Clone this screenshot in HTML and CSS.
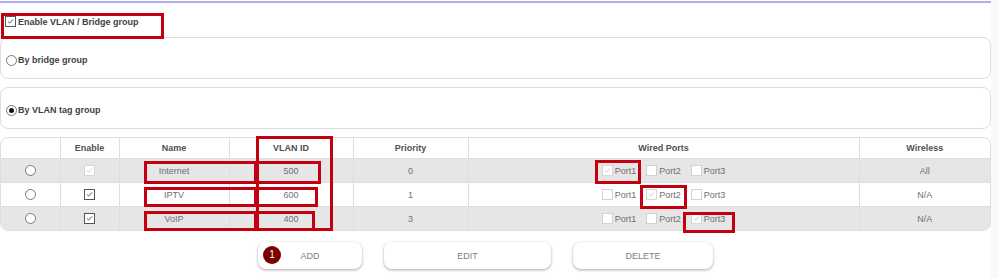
FILE: index.html
```html
<!DOCTYPE html>
<html lang="en">
<head>
  <meta charset="UTF-8">
  <title>VLAN / Bridge group</title>
  <link rel="stylesheet" href="styles.css">
</head>
<body>
  <div class="page">
    <div class="topline"></div>

    <div class="enable-row">
      <span class="cb checked"><svg viewBox="0 0 11 11"><path d="M2.5 5.5l2 2 4-4.5"/></svg></span>
      Enable VLAN / Bridge group
    </div>

    <div class="group-box">
      <span class="radio"></span>By bridge group
    </div>

    <div class="group-box">
      <span class="radio on"></span>By VLAN tag group
    </div>

    <div class="table-wrap">
      <table class="vlan-table">
        <colgroup>
          <col style="width:59px">
          <col style="width:59px">
          <col style="width:110px">
          <col style="width:124px">
          <col style="width:115px">
          <col style="width:391px">
          <col>
        </colgroup>
        <thead>
          <tr>
            <th></th>
            <th>Enable</th>
            <th>Name</th>
            <th>VLAN ID</th>
            <th>Priority</th>
            <th>Wired Ports</th>
            <th>Wireless</th>
          </tr>
        </thead>
        <tbody>
          <tr class="shade">
            <td><span class="radio"></span></td>
            <td><span class="cb checked disabled"><svg viewBox="0 0 11 11"><path d="M2.5 5.5l2 2 4-4.5"/></svg></span></td>
            <td>Internet</td>
            <td>500</td>
            <td>0</td>
            <td>
              <div class="ports">
                <span class="port"><span class="cb checked disabled"><svg viewBox="0 0 11 11"><path d="M2.5 5.5l2 2 4-4.5"/></svg></span>Port1</span>
                <span class="port"><span class="cb light"></span>Port2</span>
                <span class="port"><span class="cb light"></span>Port3</span>
              </div>
            </td>
            <td>All</td>
          </tr>
          <tr>
            <td><span class="radio"></span></td>
            <td><span class="cb checked"><svg viewBox="0 0 11 11"><path d="M2.5 5.5l2 2 4-4.5"/></svg></span></td>
            <td>IPTV</td>
            <td>600</td>
            <td>1</td>
            <td>
              <div class="ports">
                <span class="port"><span class="cb light"></span>Port1</span>
                <span class="port"><span class="cb checked disabled"><svg viewBox="0 0 11 11"><path d="M2.5 5.5l2 2 4-4.5"/></svg></span>Port2</span>
                <span class="port"><span class="cb light"></span>Port3</span>
              </div>
            </td>
            <td>N/A</td>
          </tr>
          <tr class="shade">
            <td><span class="radio"></span></td>
            <td><span class="cb checked"><svg viewBox="0 0 11 11"><path d="M2.5 5.5l2 2 4-4.5"/></svg></span></td>
            <td>VoIP</td>
            <td>400</td>
            <td>3</td>
            <td>
              <div class="ports">
                <span class="port"><span class="cb light"></span>Port1</span>
                <span class="port"><span class="cb light"></span>Port2</span>
                <span class="port"><span class="cb checked disabled"><svg viewBox="0 0 11 11"><path d="M2.5 5.5l2 2 4-4.5"/></svg></span>Port3</span>
              </div>
            </td>
            <td>N/A</td>
          </tr>
        </tbody>
      </table>
    </div>

    <div class="actions">
      <button class="btn btn-add" type="button"><span class="badge">1</span>ADD</button>
      <button class="btn btn-edit" type="button">EDIT</button>
      <button class="btn btn-delete" type="button">DELETE</button>
    </div>

    <!-- annotation marks -->
    <div class="mark mark-enable"></div>
    <div class="mark mark-vlan-col"></div>
    <div class="mark mark-internet"></div>
    <div class="mark mark-500"></div>
    <div class="mark mark-iptv"></div>
    <div class="mark mark-600"></div>
    <div class="mark mark-voip"></div>
    <div class="mark mark-400"></div>
    <div class="mark mark-port1"></div>
    <div class="mark mark-port2"></div>
    <div class="mark mark-port3"></div>
  </div>
</body>
</html>
```

FILE: styles.css
```css
body {
  margin: 0;
  padding: 0;
  font-family: "Liberation Sans", Arial, sans-serif;
  font-size: 9px;
  background: #f9f9f9;
}

.page {
  position: relative;
  width: 991px;
  height: 278px;
  background: #fff;
  padding-top: 1px;
  box-sizing: border-box;
}

.topline {
  height: 2px;
  background: #b4acf2;
}

.enable-row {
  display: flex;
  align-items: center;
  height: 34px;
  padding: 3px 0 0 5px;
  box-sizing: border-box;
  font-weight: bold;
  color: #3f3f3f;
}

.enable-row .cb {
  margin-right: 2px;
}

.group-box {
  display: flex;
  align-items: center;
  height: 42px;
  padding: 4px 0 0 5px;
  box-sizing: border-box;
  border: 1px solid #dedede;
  border-radius: 8px;
  font-weight: bold;
  color: #3f3f3f;
  margin-bottom: 8px;
}

.group-box .radio {
  margin-right: 1px;
}

/* checkbox */
.cb {
  display: inline-block;
  width: 11px;
  height: 11px;
  box-sizing: border-box;
  border: 1px solid #555;
  background: #fff;
  vertical-align: middle;
}

.cb svg {
  display: block;
  width: 9px;
  height: 9px;
  fill: none;
  stroke: #444;
  stroke-width: 1.1;
}

.cb.disabled {
  border-color: #d6d6d6;
}

.cb.disabled svg {
  stroke: #c4c4c4;
}

.cb.light {
  border-color: #d2d2d2;
}

/* radio */
.radio {
  display: inline-block;
  width: 11px;
  height: 11px;
  box-sizing: border-box;
  border: 1px solid #777;
  border-radius: 50%;
  background: #fff;
  position: relative;
  vertical-align: middle;
}

.radio.on::after {
  content: "";
  position: absolute;
  left: 2px;
  top: 2px;
  width: 5px;
  height: 5px;
  border-radius: 50%;
  background: #111;
}

/* table */
.table-wrap {
  border: 1px solid #dedede;
  border-radius: 8px;
  overflow: hidden;
}

.vlan-table {
  width: 100%;
  border-collapse: collapse;
  table-layout: fixed;
}

.vlan-table th,
.vlan-table td {
  text-align: center;
  padding: 0;
  border-left: 1px solid #dedede;
}

.vlan-table th:first-child,
.vlan-table td:first-child {
  border-left: none;
}

.vlan-table th {
  height: 20px;
  font-weight: bold;
  color: #505050;
}

.vlan-table td {
  height: 23px;
  color: #707070;
  border-top: 1px solid #dedede;
}

.vlan-table tr.shade td {
  background: #e6e6e6;
}

.ports {
  display: flex;
  justify-content: center;
  gap: 10px;
}

.port {
  display: flex;
  align-items: center;
  gap: 2px;
  color: #707070;
}

/* buttons */
.actions {
  display: flex;
  gap: 22px;
  padding: 11px 0 0 258px;
}

.btn {
  position: relative;
  height: 27px;
  border: none;
  border-radius: 8px;
  background: #fff;
  box-shadow: 0 1px 3px rgba(0,0,0,0.35);
  font-family: inherit;
  font-size: 9px;
  color: #808080;
  padding: 0;
}

.btn-add { width: 104px; }
.btn-edit { width: 167px; }
.btn-delete { width: 140px; }

.badge {
  position: absolute;
  left: 5px;
  top: 4px;
  width: 18px;
  height: 18px;
  border-radius: 50%;
  background: #7a0000;
  color: #fff;
  font-size: 10px;
  line-height: 18px;
  text-align: center;
}

/* red annotation boxes */
.mark {
  position: absolute;
  box-sizing: border-box;
  border: 3px solid #c3000f;
}

.mark-enable { left: 1px; top: 13px; width: 163px; height: 26px; }
.mark-vlan-col { left: 256px; top: 136px; width: 77px; height: 95px; }
.mark-internet { left: 144px; top: 161px; width: 113px; height: 23px; }
.mark-500 { left: 256px; top: 161px; width: 65px; height: 23px; }
.mark-iptv { left: 144px; top: 187px; width: 113px; height: 20px; }
.mark-600 { left: 256px; top: 187px; width: 62px; height: 20px; }
.mark-voip { left: 144px; top: 211px; width: 113px; height: 20px; }
.mark-400 { left: 256px; top: 211px; width: 59px; height: 20px; }
.mark-port1 { left: 595px; top: 160px; width: 46px; height: 24px; }
.mark-port2 { left: 640px; top: 185px; width: 47px; height: 24px; }
.mark-port3 { left: 683px; top: 212px; width: 52px; height: 21px; }
```
